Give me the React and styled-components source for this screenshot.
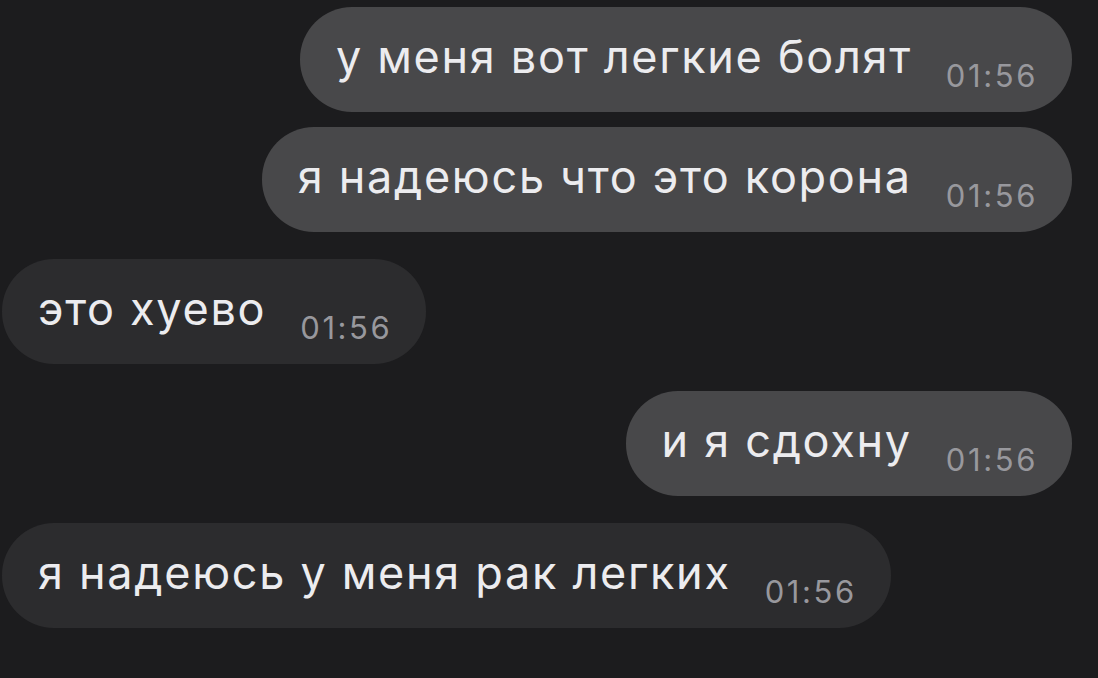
import React from "react";
import styled, { createGlobalStyle } from "styled-components";

const Global = createGlobalStyle`
  html, body { margin: 0; padding: 0; background: #1c1c1e; }
  body { width: 1098px; height: 678px; overflow: hidden; }
`;

const Chat = styled.div`
  display: flex;
  flex-direction: column;
  padding: 7px 26px 0 2px;
  font-family: Inter, "Noto Sans", sans-serif;
`;

const Row = styled.div`
  display: flex;
  justify-content: ${(p) => (p.$out ? "flex-end" : "flex-start")};
  margin-top: ${(p) => (p.$first ? 0 : p.$same ? 15 : 27)}px;
`;

const Bubble = styled.div`
  display: flex;
  align-items: center;
  height: 105px;
  box-sizing: border-box;
  padding: 0 34px 0 36px;
  border-radius: 52px;
  background: ${(p) => (p.$out ? "#48484a" : "#2c2c2e")};
`;

const Text = styled.span`
  font-size: 45px;
  letter-spacing: 1.7px;
  line-height: 1;
  margin-bottom: 6px;
  color: #ececef;
  white-space: nowrap;
`;

const Time = styled.span`
  margin-left: 34px;
  margin-top: 32px;
  font-size: 31px;
  letter-spacing: 2.6px;
  line-height: 1;
  color: #98989d;
`;

const messages = [
  { out: true, text: "у меня вот легкие болят" },
  { out: true, text: "я надеюсь что это корона" },
  { out: false, text: "это хуево" },
  { out: true, text: "и я сдохну" },
  { out: false, text: "я надеюсь у меня рак легких" },
];

export default function App() {
  return (
    <>
      <Global />
      <Chat>
        {messages.map((m, i) => (
          <Row
            key={i}
            $out={m.out}
            $first={i === 0}
            $same={i > 0 && messages[i - 1].out === m.out}
          >
            <Bubble $out={m.out}>
              <Text>{m.text}</Text>
              <Time>01:56</Time>
            </Bubble>
          </Row>
        ))}
      </Chat>
    </>
  );
}
